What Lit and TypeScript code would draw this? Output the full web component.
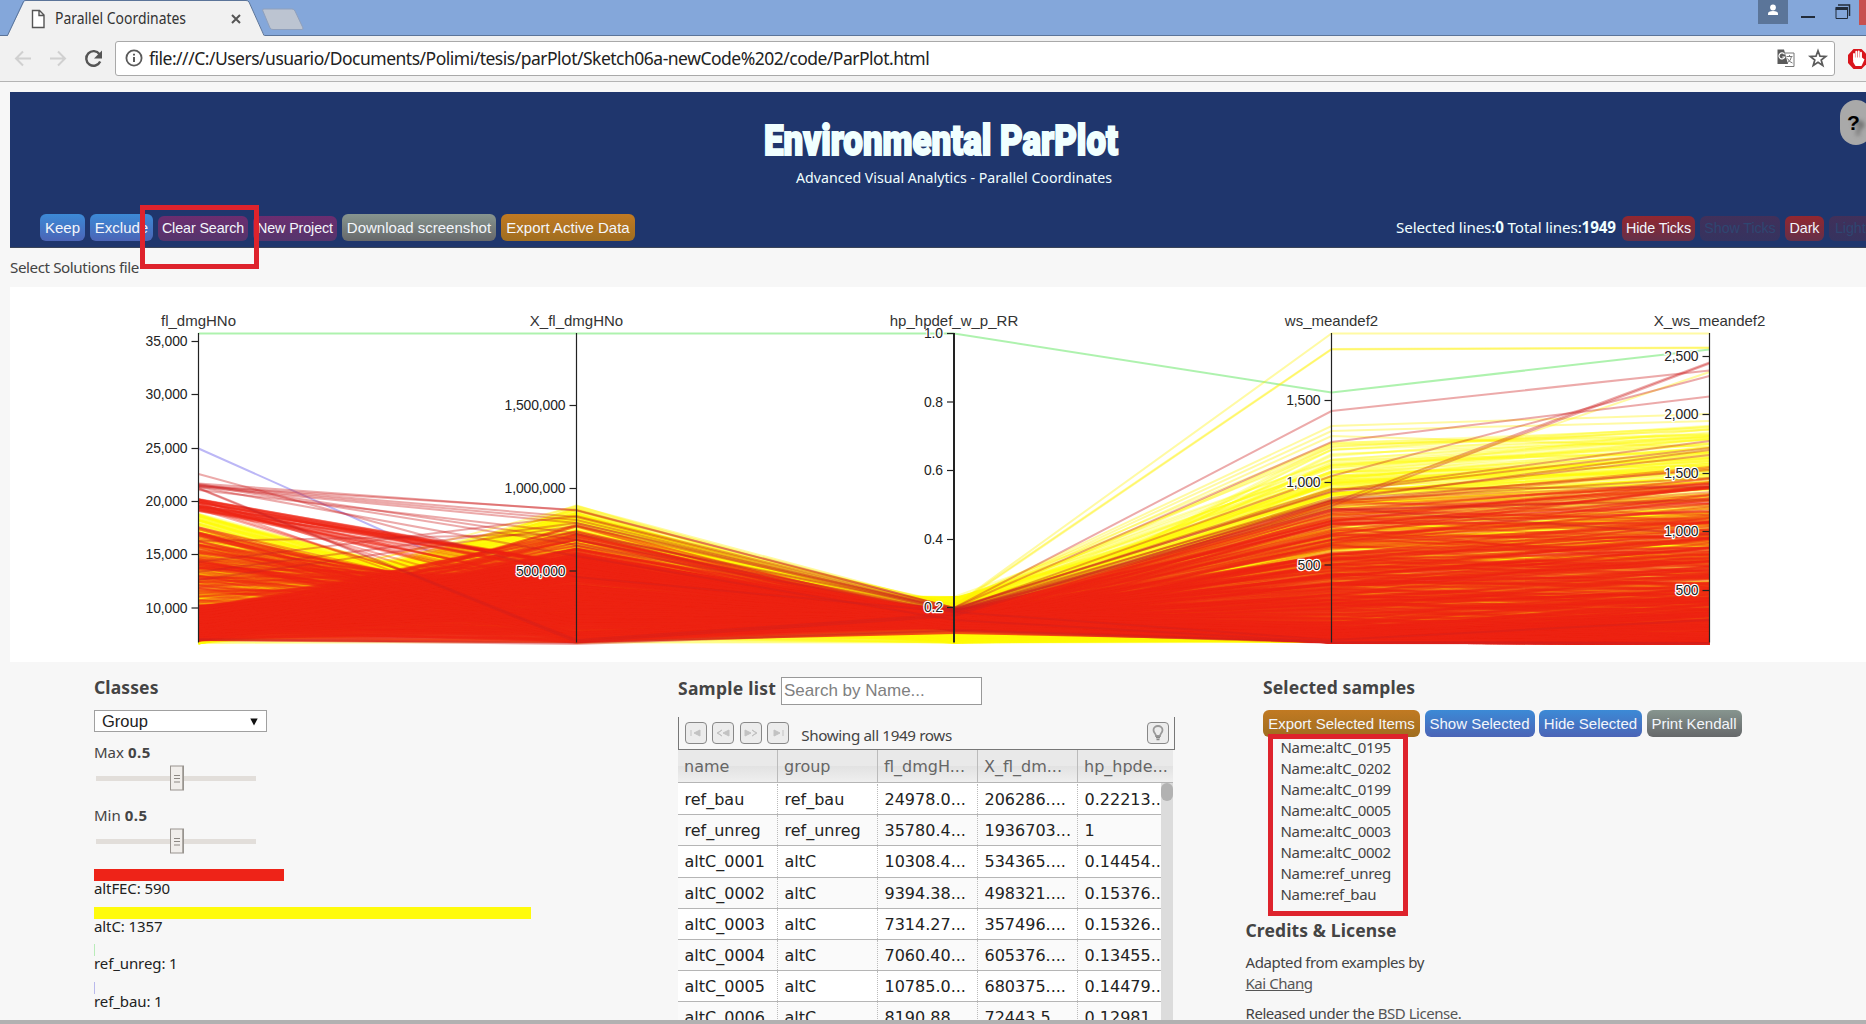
import { LitElement, html, svg, css } from "lit";
import { customElement } from "lit/decorators.js";

/* ---------- parallel coordinates ---------- */

const AXES = [
  { x: 198.5, label: "fl_dmgHNo", w: 1, ticks: [["35,000", 341.5], ["30,000", 394.5], ["25,000", 448.5], ["20,000", 501.5], ["15,000", 554.5], ["10,000", 608]] },
  { x: 576.5, label: "X_fl_dmgHNo", w: 1, ticks: [["1,500,000", 405.5], ["1,000,000", 488.5], ["500,000", 571]] },
  { x: 954, label: "hp_hpdef_w_p_RR", w: 2, ticks: [["1.0", 333.5], ["0.8", 402], ["0.6", 470.5], ["0.4", 539.5], ["0.2", 607.5]] },
  { x: 1331.5, label: "ws_meandef2", w: 1, ticks: [["1,500", 400.5], ["1,000", 482.5], ["500", 565]] },
  { x: 1709.5, label: "X_ws_meandef2", w: 1, ticks: [["2,500", 356.5], ["2,000", 414.5], ["1,500", 473.5], ["1,000", 531.5], ["500", 590.5]] },
] as { x: number; label: string; w: number; ticks: [string, number][] }[];

function rng(seed: number) {
  let s = seed >>> 0;
  return () => {
    s = (s + 0x6d2b79f5) >>> 0;
    let t = s;
    t = Math.imul(t ^ (t >>> 15), t | 1);
    t ^= t + Math.imul(t ^ (t >>> 7), t | 61);
    return ((t ^ (t >>> 14)) >>> 0) / 4294967296;
  };
}

const clamp = (v: number, a: number, b: number) => Math.max(a, Math.min(b, v));

function path(ys: number[]) {
  return "M" + ys.map((y, i) => `${AXES[i].x} ${y.toFixed(1)}`).join("L");
}

function yellowLines(): string[] {
  const r = rng(7);
  const out: string[] = [];
  for (let i = 0; i < 800; i++) {
    const y1 = r() < 0.08 ? 563 + r() * 13 : 643.5 - 130 * Math.pow(r(), 1.5);
    const top = clamp(1124 - y1, 505 + 8 * r(), 640);
    const y2 = clamp(top + (643 - top) * Math.pow(r(), 1.2), 504, 643);
    const q = r();
    const high = 597 + clamp((588 - y2) * 0.16, 0, 13);
    const y3 = q < 0.34 ? high + r() * 10 : q < 0.62 ? 633 + r() * 10 : high + r() * (642 - high);
    let y4 = 642 - 178 * Math.pow(r(), 2);
    if (r() < 0.02) y4 = 440 + r() * 26;
    const lift = clamp((560 - y4) / 60, 0, 1) * 10;
    const y5 = clamp(642 - (642 - y4) * (1.04 + 0.14 * r()) - lift * r() + (r() - 0.5) * 22, 416 + r() * 22, 643.5);
    out.push(path([y1, y2, y3, y4, y5]));
  }
  return out;
}

const YELLOW_TOP = [
  [612, 530, 606, 333.5, 333.5], [600, 540, 606, 349, 347.5], [620, 534, 607, 349.5, 348],
  [600, 520, 604, 426, 414], [596, 516, 605, 431, 421], [607, 506, 607, 436, 447], [630, 508, 608, 447, 430],
  [560, 560, 604, 500, 372],
].map(path);

function redLines(): string[] {
  const r = rng(21);
  const out: string[] = [];
  for (let i = 0; i < 575; i++) {
    const q = r();
    const y1 = q < 0.07 ? 499 + r() * 13 : q < 0.34 ? 527 + r() * 83 : 641 - 36 * r();
    const top = q < 0.07 ? 564 : clamp(1142 - y1, 524, 640);
    let y2 = clamp(top + (643 - top) * Math.pow(r(), q < 0.07 ? 2.4 : 1.1), 524, 643);
    if (y2 < 548 && r() < 0.6) y2 += 32;
    const y3 = 609.5 + clamp((575 - y2) * 0.08, 0, 4) + r() * 20;
    const y4 = 642.5 - 143 * Math.pow(r(), 2.4);
    const y5 = clamp(642 - (642 - y4) * (0.85 + 0.5 * r()) + (r() - 0.6) * 58, 466 + r() * 24, 644);
    out.push(path([y1, y2, y3, y4, y5]));
  }
  return out;
}

const RED_TOP = [
  [474, 577, 612, 640, 620], [483.5, 510.5, 608, 411, 370.5], [486, 510, 608, 442, 396.5],
  [485, 517, 610, 476, 376], [486, 520, 611, 503, 362.5], [487, 523, 612, 506, 363.5],
  [490, 533, 609, 491, 441], [562, 516, 608, 492, 448], [572, 523, 609, 489, 487],
  [580, 526, 609, 500, 450], [541, 534, 610, 508, 535], [488, 640, 614, 501, 478],
  [488.5, 642, 616, 500, 470], [487, 556, 620, 642, 643], [639, 643, 630, 642, 643], [640, 644, 631, 643, 644],
  [484, 540, 611, 498, 455], [485, 545, 612, 510, 500],
].map(path);

const YELLOW = yellowLines();
const RED = redLines();

@customElement("parallel-chart")
export class ParallelChart extends LitElement {
  static styles = css`
    :host { display: block; background: #fff; height: 375px; }
    svg { display: block; font-family: "Liberation Sans", Arial, sans-serif; }
    .tick { font-size: 13.9px; fill: #222; text-anchor: end; paint-order: stroke; stroke: #fff; stroke-width: 2.4px; stroke-linejoin: round; letter-spacing: -0.1px; }
    .label { font-size: 15px; fill: #333; text-anchor: middle; }
    .line { fill: none; stroke-width: 2; }
    .yellow { stroke: #fffb08; stroke-opacity: 0.3; }
    .yellow-top { stroke: #fff200; stroke-opacity: 0.36; }
    .red { stroke: #ee2414; stroke-opacity: 0.36; }
    .red-top { stroke: #cc2020; stroke-opacity: 0.38; }
    .axis { stroke: #222; }
  `;

  render() {
    return html`<svg width="1856" height="375" viewBox="10 287 1856 375">
      <path class="line" d=${path([448.5, 617, 603, 640, 640])} stroke="#7a70ee" stroke-opacity="0.5"></path>
      <path class="line" d=${path([333.5, 333.5, 333.5, 392.5, 349.5])} stroke="#3ee03e" stroke-opacity="0.42"></path>
      <g class="yellow">${YELLOW.map((d) => svg`<path class="line" d=${d}></path>`)}</g>
      <g class="yellow-top">${YELLOW_TOP.map((d) => svg`<path class="line" d=${d}></path>`)}</g>
      <path d="M198.5 614L300 602L430 579L576.5 556L760 597L954 611L1060 616L1331.5 622L1709.5 634V642H1331.5L954 634L576.5 643L198.5 641Z" fill="#ef2614" fill-opacity=".8"></path>
      <g class="red">${RED.map((d) => svg`<path class="line" d=${d}></path>`)}</g>
      <g class="red-top">${RED_TOP.map((d) => svg`<path class="line" d=${d}></path>`)}</g>
      ${AXES.map((a) => svg`
        <path class="axis" d=${`M${a.x} 333V642.5`} stroke-width=${a.w === 2 ? 2 : 1.2}></path>
        ${a.ticks.map(([t, y]) => svg`
          <path class="axis" d=${`M${a.x - 7} ${y}H${a.x}`} stroke-width="1.2"></path>
          <text class="tick" x=${a.x - 11} y=${y + 4.5}>${t}</text>`)}
        <text class="label" x=${a.x} y="326">${a.label}</text>`)}
    </svg>`;
  }
}

/* ---------- browser chrome ---------- */

@customElement("browser-bar")
export class BrowserBar extends LitElement {
  static styles = css`
    :host { display: block; font-family: "Noto Sans", "Open Sans", sans-serif; }
    .strip { height: 35px; background: #84a7da; border-bottom: 1px solid #5b7499; display: flex; position: relative; }
    .tabs { display: block; flex: none; }
    .controls { display: block; margin-left: auto; flex: none; }
    .tab-text { font-size: 15.5px; fill: #333; }
    .bar { height: 45px; background: #f1f1f1; border-bottom: 1px solid #b4b4b4; display: flex; align-items: center; }
    .nav { display: block; width: 115px; flex: none; }
    .url { box-sizing: border-box; width: 1720px; height: 35px; margin-top: -1px; border: 1px solid #a9a9a9; border-radius: 3px; background: #fff; display: flex; align-items: center; padding-left: 9px; flex: none; }
    .url svg { flex: none; }
    .address { font-size: 17.5px; color: #222; margin-left: 6px; white-space: nowrap; flex: 1; letter-spacing: -0.5px; }
    .ext { margin-left: 11px; flex: none; }
  `;
  render() {
    return html`
      <div class="strip">
        <svg class="tabs" width="310" height="36" viewBox="0 0 310 36">
          <path d="M0 36H7.500L24 2Q24.500 .5 26 .5H246Q248 .5 249 2L264.500 36Z" fill="#f1f1f1"></path>
          <path d="M0 35.500H7.500L23.500 1.500Q24 .5 26 .5H246Q248 .5 249 2L264 35.500" fill="none" stroke="#5b7499"></path>
          <path d="M262.500 10Q262.500 9 264 9H292Q294 9 295 11L303 28Q303 29.500 302 29.500H273Q271 29.500 270 28Z" fill="#bcc4d1" stroke="#8fa0bd"></path>
          <path d="M32.500 10.500H39.500L44 15V27.500H32.500ZM39 10.500V15.500H44" fill="#fff" stroke="#555" stroke-width="1.400"></path>
          <text class="tab-text" x="55" y="24" textLength="131" lengthAdjust="spacingAndGlyphs">Parallel Coordinates</text>
          <path d="M232 15L240 23M240 15L232 23" stroke="#555" stroke-width="2"></path>
        </svg>
        <svg class="controls" width="120" height="36" viewBox="1746 0 120 36">
          <rect x="1758" y="0" width="30" height="24" fill="#5b7599"></rect>
          <circle cx="1773" cy="7.500" r="2.900" fill="#fff"></circle>
          <path d="M1768 15V13.500Q1768 11 1773 11T1778 13.500V15Z" fill="#fff"></path>
          <path d="M1801 17H1815" stroke="#222c3a" stroke-width="2"></path>
          <path d="M1838 5H1849.500V16" fill="none" stroke="#222c3a" stroke-width="1.500"></path>
          <path d="M1836 8.500V18.500H1847.500V8.500" fill="none" stroke="#222c3a"></path>
          <path d="M1835.500 8.500H1848" stroke="#222c3a" stroke-width="3"></path>
          <rect x="1859" y="0" width="7" height="25" fill="#c75050"></rect>
        </svg>
      </div>
      <div class="bar">
        <svg class="nav" width="115" height="45" viewBox="0 36 115 45">
          <g fill="none" stroke="#d0d0d0" stroke-width="2">
            <path d="M31 58.500H16M23 51.500L16 58.500L23 65.500"></path>
            <path d="M50 58.500H65M58 51.500L65 58.500L58 65.500"></path>
          </g>
          <path d="M99.500 54.200A7.300 7.300 0 1 0 100.200 61.500" fill="none" stroke="#555" stroke-width="2.400"></path>
          <path d="M102 50.500V58.500H94Z" fill="#555"></path>
        </svg>
        <div class="url">
          <svg width="18" height="18" viewBox="0 0 18 18">
            <circle cx="9" cy="9" r="7.600" fill="none" stroke="#5a5a5a" stroke-width="1.800"></circle>
            <path d="M9 8V13M9 4.700V6.500" stroke="#5a5a5a" stroke-width="2"></path>
          </svg>
          <span class="address">file:///C:/Users/usuario/Documents/Polimi/tesis/parPlot/Sketch06a-newCode%202/code/ParPlot.html</span>
          <svg width="60" height="20" viewBox="1774 49 60 20">
            <path d="M1785 54H1794V67.500H1785" fill="#fff" stroke="#777"></path>
            <path d="M1777.500 50.500H1784L1788 65H1777.500Z" fill="#5a5a5a"></path>
            <path d="M1784.500 55.300A3 3 0 1 0 1784.800 58H1782.300" fill="none" stroke="#fff" stroke-width="1.200"></path>
            <path d="M1786.500 57.500H1792.500M1789.500 56V57.500M1787 64Q1791 62 1791.500 57.500M1787.500 59.500Q1789 63 1792.500 64" fill="none" stroke="#777"></path>
            <path d="M1818 51.800L1820 57.200L1825.700 57.400L1821.200 61L1822.800 66.500L1818 63.300L1813.200 66.500L1814.800 61L1810.300 57.400L1816 57.200Z" fill="#fff" stroke="#5a5a5a" stroke-width="1.700"></path>
          </svg>
        </div>
        <svg class="ext" width="22" height="22" viewBox="0 0 22 22">
          <path d="M7.500 1H15.500L21.500 7V15L15.500 21H7.500L2 15V7Z" fill="#d9151c"></path>
          <path d="M8 11V6M10.300 10V3.800M12.700 10V3.500M15 11V4.800" stroke="#fff" stroke-width="1.900" stroke-linecap="round"></path>
          <path d="M7.100 9.500H16L18.500 11.500L15.500 18H9.500L7.100 14Z" fill="#fff"></path>
        </svg>
      </div>`;
  }
}

/* ---------- page ---------- */

const ROWS = [
  ["ref_bau", "ref_bau", "24978.0...", "206286....", "0.22213.."],
  ["ref_unreg", "ref_unreg", "35780.4...", "1936703...", "1"],
  ["altC_0001", "altC", "10308.4...", "534365....", "0.14454.."],
  ["altC_0002", "altC", "9394.38...", "498321....", "0.15376.."],
  ["altC_0003", "altC", "7314.27...", "357496....", "0.15326.."],
  ["altC_0004", "altC", "7060.40...", "605376....", "0.13455.."],
  ["altC_0005", "altC", "10785.0...", "680375....", "0.14479.."],
  ["altC_0006", "altC", "8190.88...", "72443.5...", "0.12981.."],
];
const HEAD = ["name", "group", "fl_dmgH...", "X_fl_dm...", "hp_hpde..."];
const SELECTED = ["altC_0195", "altC_0202", "altC_0199", "altC_0005", "altC_0003", "altC_0002", "ref_unreg", "ref_bau"];
const GROUPS = [
  { text: "altFEC: 590", w: 190, c: "#ee2318" },
  { text: "altC: 1357", w: 437, c: "#fffb0c" },
  { text: "ref_unreg: 1", w: 1, c: "#b9ecb9" },
  { text: "ref_bau: 1", w: 1, c: "#b9b9ec" },
];

@customElement("app-root")
export class AppRoot extends LitElement {
  static styles = css`
    :host { display: block; position: relative; width: 1866px; height: 1024px; overflow: hidden; background: #f7f7f7; color: #444; font-family: "Noto Sans", "Open Sans", sans-serif; font-size: 15px; line-height: 21px; }
    * { box-sizing: border-box; }
    .header { margin: 10px 0 0 10px; height: 156px; background: #1f366d; border-bottom: 1px solid #3a4458; display: flex; flex-direction: column; color: azure; }
    .brand { display: block; height: 122px; flex: none; }
    .title { font-family: Roboto, "Liberation Sans", sans-serif; font-weight: 900; font-size: 42px; fill: azure; stroke: azure; stroke-width: 2px; }
    .sub { font-size: 15px; fill: azure; }
    .tools { display: flex; align-items: flex-end; height: 27px; padding-left: 30px; }
    .btn { font: 15px/27px "Liberation Sans", Arial, sans-serif; height: 27px; border-radius: 6px; border: 0; padding: 0; text-align: center; color: #f3f6fb; white-space: nowrap; flex: none; margin-right: 5px; }
    .small { height: 25px; font-size: 14.3px; line-height: 24px; padding-bottom: 1px; letter-spacing: -0.1px; }
    .blue { background: linear-gradient(#3c8ad6, #4b64b6); }
    .purple { background: linear-gradient(#6b2d70, #55356c); }
    .gray { background: linear-gradient(#87958f, #66686a); }
    .orange { background: linear-gradient(#c17a22, #9f6d20); }
    .redb { background: linear-gradient(#93272f, #63304a); }
    .off { background: linear-gradient(#41305a, #35335f); color: #2f4671; }
    .edge { text-align: left; padding-left: 6px; margin-right: -5px; }
    .counts { margin-left: auto; font-size: 15.2px; line-height: 27px; width: 226px; white-space: nowrap; letter-spacing: -0.13px; }
    .help { position: absolute; left: 1840px; top: 100px; width: 32px; height: 45px; border-radius: 16px; background: #a9a9a9; color: #000; font: bold 21px/45px "Liberation Sans", Arial, sans-serif; padding-left: 7px; text-shadow: 5px 5px 4px #555; }
    .file { height: 39px; line-height: 39px; padding-left: 10px; font-size: 15.2px; letter-spacing: -0.42px; }
    parallel-chart { margin-left: 10px; }
    .cols { display: grid; grid-template-columns: 584px 568px 1fr; padding-left: 94px; height: 362px; overflow: hidden; }
    h3 { margin: 0; font-size: 17.5px; line-height: 24px; font-weight: 700; letter-spacing: 0.12px; color: #444; }
    .classes, .samples, .selected { padding-top: 13px; min-width: 0; }
    .select { width: 173px; height: 22px; margin-top: 11px; border: 1px solid #a0a0a0; background: #fff; color: #222; font: 16.500px/21px "Liberation Sans", Arial, sans-serif; display: flex; justify-content: space-between; padding: 0 8px 0 7px; }
    .select svg { margin-top: 7px; }
    .range { height: 63px; padding-top: 10px; }
    .range-label b { letter-spacing: 0.5px; }
    .range svg { display: block; margin-top: 2px; }
    .group { height: 37.5px; color: #222; }
    .group-bar { height: 12px; }
    .group-text { font-size: 15px; line-height: 14px; letter-spacing: -0.1px; }
    .groups { padding-top: 11px; }
    .find { display: flex; height: 28px; margin-top: 2px; }
    .find h3 { width: 103px; line-height: 23px; letter-spacing: 0.25px; }
    .search { width: 201px; height: 28px; border: 1px solid #999; background: #fff; color: #808080; font: 17px/26px "Liberation Sans", Arial, sans-serif; padding-left: 2px; }
    .pager { width: 497px; height: 33px; margin-top: 12px; border: 1px solid #777; border-top: 0; display: flex; padding: 5px 5px 0 6px; }
    .pb { width: 22px; height: 22px; border: 1px solid #888; border-radius: 4px; background: #ececec; margin-right: 5.300px; display: flex; align-items: center; justify-content: center; flex: none; }
    .pager-text { flex: 1; margin-left: 7px; line-height: 27px; font-size: 15.2px; letter-spacing: -0.36px; }
    .pager .last { margin-right: 0; }
    .grid-table { width: 495px; font-family: "DejaVu Sans", Verdana, sans-serif; font-size: 16px; overflow: hidden; height: 274px; color: #222; }
    .row { display: grid; grid-template-columns: 100px 100px 100px 100px 83px; height: 31.200px; background: #fff; border-bottom: 1px solid #b5b5b5; }
    .row:nth-child(even) { background: #fafafa; }
    .row.head { grid-template-columns: 100px 100px 100px 100px 95px; height: 33px; background: linear-gradient(#e9e9e9 0 50%, #e2e2e2 51%, #efefef); color: #666; border-bottom: 1px solid #b5b5b5; }
    .cell { padding-left: 6.5px; line-height: 32px; border-right: 1px dotted #bbb; white-space: nowrap; overflow: hidden; }
    .cell:last-child { border-right: 0; }
    .head .cell { padding-left: 6px; border-right-style: solid; line-height: 34px; }
    .body { display: flex; }
    .rows { width: 483px; flex: none; padding-top: 1px; background: #fff; }
    .scroll { width: 12px; background: #dcdcdc; }
    .thumb { height: 18px; border-radius: 6px; background: #b2b2b2; }
    .selected .tools { padding: 0; margin-top: 11px; align-items: flex-start; }
    .selected .btn { margin-right: 4.5px; }
    .selected { padding-left: 17px; }
    .list { padding-left: 17.5px; }
    .name { letter-spacing: -0.3px; white-space: nowrap; }
    .credits { margin: 13px 0 10px -17.5px; }
    .para { margin: 0 0 9px -17.5px; letter-spacing: -0.45px; white-space: nowrap; }
    .link { color: #555; }
    .under { text-decoration: underline; }
    .mark { position: absolute; border: 5px solid #de232c; }
    .mark-search { left: 140px; top: 205px; width: 119px; height: 64px; }
    .mark-list { left: 1268px; top: 734px; width: 140px; height: 182px; }
    .foot { height: 4px; background: #b1b1b1; margin-top: -4px; position: relative; }
  `;

  private btn(text: string, w: number, cls: string) {
    return html`<button class="btn ${cls}" style="width:${w}px">${text}</button>`;
  }

  private range(label: string) {
    return html`<div class="range">
      <div class="range-label">${label} <b>0.5</b></div>
      <svg width="172" height="26" viewBox="0 0 172 26">
        <rect x="2" y="11" width="160" height="5" fill="#e2deda"></rect>
        <rect x="76.500" y="1" width="13" height="24" fill="#f1eeeb" stroke="#99948f"></rect>
        <path d="M89 1V25" stroke="#99948f" stroke-width="1.500"></path>
        <path d="M80 10.500H86M80 13.500H86M80 17H86" stroke="#8d8883" stroke-width="1.200"></path>
      </svg>
    </div>`;
  }

  private row(cells: string[], cls = "") {
    return html`<div class="row ${cls}">${cells.map((c) => html`<div class="cell">${c}</div>`)}</div>`;
  }

  private pagerButton(d: string) {
    return html`<div class="pb"><svg width="16" height="10" viewBox="0 0 16 10"><path d=${d} fill="#c2c2c2" stroke="#c2c2c2"></path></svg></div>`;
  }

  render() {
    return html`
      <browser-bar></browser-bar>
      <div class="header">
        <svg class="brand" width="1856" height="122" viewBox="10 92 1856 122">
          <text class="title" x="764" y="155" textLength="354" lengthAdjust="spacingAndGlyphs">Environmental ParPlot</text>
          <text class="sub" x="796" y="183" textLength="316" lengthAdjust="spacingAndGlyphs">Advanced Visual Analytics - Parallel Coordinates</text>
        </svg>
        <div class="tools">
          ${this.btn("Keep", 45, "blue")}${this.btn("Exclude", 63, "blue")}
          ${this.btn("Clear Search", 90, "purple small")}${this.btn("New Project", 84, "purple small")}
          ${this.btn("Download screenshot", 154, "gray")}${this.btn("Export Active Data", 134, "orange")}
          <div class="counts">Selected lines:<b>0</b> Total lines:<b>1949</b></div>
          ${this.btn("Hide Ticks", 73, "redb small")}${this.btn("Show Ticks", 80, "small off")}
          ${this.btn("Dark", 39, "redb small")}${this.btn("Light", 42, "small off edge")}
        </div>
      </div>
      <div class="file">Select Solutions file</div>
      <parallel-chart></parallel-chart>
      <div class="cols">
        <div class="classes">
          <h3>Classes</h3>
          <div class="select">Group <svg width="8" height="8" viewBox="0 0 8 8"><path d="M.3 .5H7.700L4 7.500Z" fill="#111"></path></svg></div>
          ${this.range("Max")}${this.range("Min")}
          <div class="groups">
            ${GROUPS.map((g) => html`<div class="group">
              <div class="group-bar" style="width:${g.w}px;background:${g.c}"></div>
              <div class="group-text">${g.text}</div>
            </div>`)}
          </div>
        </div>
        <div class="samples">
          <div class="find"><h3>Sample list</h3><div class="search">Search by Name...</div></div>
          <div class="pager">
            ${this.pagerButton("M3 2V8M12 2V8L6 5Z")}${this.pagerButton("M7 2L2 5L7 8L3 5ZM14 2V8L8 5Z")}
            ${this.pagerButton("M2 2V8L8 5ZM9 2L14 5L9 8L13 5Z")}${this.pagerButton("M4 2V8L10 5ZM13 2V8")}
            <div class="pager-text">Showing all 1949 rows</div>
            <div class="pb last"><svg width="14" height="16" viewBox="0 0 14 16"><path d="M5 11C5 8.500 2.500 8 2.500 5A4.500 4 0 0 1 11.500 5C11.500 8 9 8.500 9 11Z" fill="none" stroke="#999" stroke-width="1.800"></path><path d="M5 12.500H9M5.500 14.500H8.500" stroke="#888" stroke-width="1.500"></path></svg></div>
          </div>
          <div class="grid-table">
            ${this.row(HEAD, "head")}
            <div class="body">
              <div class="rows">${ROWS.map((r) => this.row(r))}</div>
              <div class="scroll"><div class="thumb"></div></div>
            </div>
          </div>
        </div>
        <div class="selected">
          <h3>Selected samples</h3>
          <div class="tools">
            ${this.btn("Export Selected Items", 157, "orange")}${this.btn("Show Selected", 110, "blue")}
            ${this.btn("Hide Selected", 103, "blue")}${this.btn("Print Kendall", 95, "gray")}
          </div>
          <div class="list">${SELECTED.map((s) => html`<div class="name">Name:${s}</div>`)}</div>
          <h3 class="credits">Credits &amp; License</h3>
          <div class="para">Adapted from examples by<br><span class="link under">Kai Chang</span></div>
          <div class="para">Released under the <span class="link">BSD License.</span></div>
        </div>
      </div>
      <div class="foot"></div>
      <div class="help">?</div>
      <div class="mark mark-search"></div>
      <div class="mark mark-list"></div>`;
  }
}
